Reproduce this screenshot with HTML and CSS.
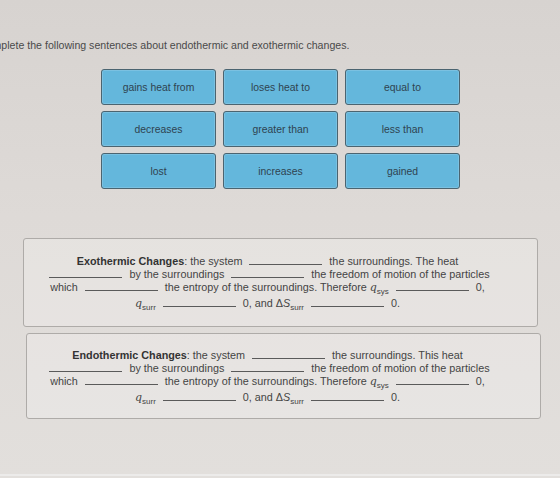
FILE: index.html
```html
<!DOCTYPE html>
<html lang="en">
<head>
  <meta charset="UTF-8" />
  <title>Endothermic and Exothermic Changes</title>
  <link rel="stylesheet" href="styles.css">
</head>
<body>
  <div class="screen">
    <p class="prompt">Complete the following sentences about endothermic and exothermic changes.</p>

    <div class="choices">
      <div class="choice">gains heat from</div>
      <div class="choice">loses heat to</div>
      <div class="choice">equal to</div>
      <div class="choice">decreases</div>
      <div class="choice">greater than</div>
      <div class="choice">less than</div>
      <div class="choice">lost</div>
      <div class="choice">increases</div>
      <div class="choice">gained</div>
    </div>

    <div class="panel">
      <div class="line"><b>Exothermic Changes</b>: the system <span class="blank"></span> the surroundings. The heat</div>
      <div class="line"><span class="blank"></span> by the surroundings <span class="blank"></span> the freedom of motion of the particles</div>
      <div class="line">which <span class="blank"></span> the entropy of the surroundings. Therefore <i class="q">q</i><sub>sys</sub> <span class="blank"></span> 0,</div>
      <div class="line last"><i class="q">q</i><sub>surr</sub> <span class="blank"></span> 0, and &Delta;<i>S</i><sub>surr</sub> <span class="blank"></span> 0.</div>
    </div>

    <div class="panel second">
      <div class="line"><b>Endothermic Changes</b>: the system <span class="blank"></span> the surroundings. This heat</div>
      <div class="line"><span class="blank"></span> by the surroundings <span class="blank"></span> the freedom of motion of the particles</div>
      <div class="line">which <span class="blank"></span> the entropy of the surroundings. Therefore <i class="q">q</i><sub>sys</sub> <span class="blank"></span> 0,</div>
      <div class="line last"><i class="q">q</i><sub>surr</sub> <span class="blank"></span> 0, and &Delta;<i>S</i><sub>surr</sub> <span class="blank"></span> 0.</div>
    </div>
  </div>
</body>
</html>
```

FILE: styles.css
```css
/* Base */
* {
  box-sizing: border-box;
  margin: 0;
  padding: 0;
}

html, body {
  width: 560px;
  height: 478px;
  overflow: hidden;
}

body {
  font-family: 'Liberation Sans', Arial, sans-serif;
  color: #3c3c3c;
  background: linear-gradient(180deg, #d7d3d0 0%, #dedad7 45%, #e2dfdc 100%);
}

.screen {
  height: 476px;
  padding-top: 39px;
  border-bottom: 2px solid #ecebea;
}

/* Instruction line (cut off on the left in the shot) */
.prompt {
  font-size: 10.6px;
  line-height: 12px;
  color: #4a4a4a;
  margin-left: -21px;
  white-space: nowrap;
}

/* Answer tiles */
.choices {
  display: grid;
  grid-template-columns: repeat(3, 115px);
  grid-auto-rows: 36px;
  column-gap: 7px;
  row-gap: 6px;
  margin: 18px 0 0 101px;
}

.choice {
  display: flex;
  align-items: center;
  justify-content: center;
  background: #64b7dc;
  border: 1px solid #4b6470;
  border-radius: 3px;
  box-shadow: inset 0 0 0 1px rgba(255, 255, 255, 0.15);
  font-size: 10.4px;
  color: #2f4350;
}

/* Sentence panels */
.panel {
  width: 515px;
  height: 89px;
  margin: 49px 0 0 23px;
  padding: 16px 26px 0 0;
  border: 1px solid #aeaba8;
  border-radius: 3px;
  background: rgba(255, 255, 255, 0.22);
  text-align: center;
  font-size: 10.8px;
  color: #444;
}

.panel.second {
  height: 86px;
  margin-top: 6px;
  margin-left: 26px;
  padding-top: 15px;
  padding-right: 32px;
}

.line {
  line-height: 13px;
  white-space: nowrap;
}

.line.last {
  margin-top: 3px;
}

.line b {
  color: #333;
}

.blank {
  display: inline-block;
  width: 73px;
  height: 9px;
  margin: 0 4px;
  border-bottom: 1px solid #5a5a5a;
}

.q {
  font-family: 'DejaVu Serif', serif;
  font-size: 11px;
}

sub {
  font-size: 8px;
  line-height: 0;
}
```
